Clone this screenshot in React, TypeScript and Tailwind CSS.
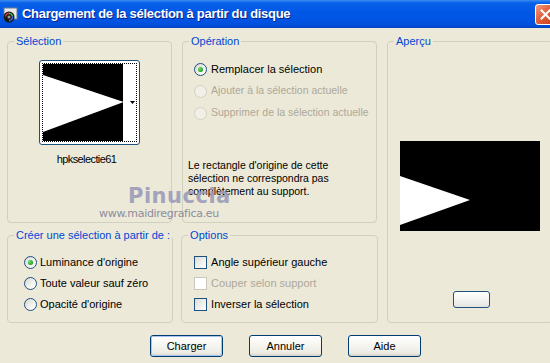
import React from "react";

function Radio({ checked, disabled }: { checked?: boolean; disabled?: boolean }) {
  return (
    <span
      className={
        disabled
          ? "flex h-[13px] w-[13px] shrink-0 items-center justify-center rounded-full border border-[#D3D0C2] bg-[#F2F0E6]"
          : "flex h-[13px] w-[13px] shrink-0 items-center justify-center rounded-full border border-[#1C5180] bg-[linear-gradient(135deg,#D8D8D2_0%,#F4F4F0_60%,#FFFFFF_100%)]"
      }
    >
      {checked && (
        <span className="h-[5px] w-[5px] rounded-full bg-[radial-gradient(circle_at_35%_35%,#6FE06F_0%,#21A121_70%,#1A8A1A_100%)]" />
      )}
    </span>
  );
}

function Check({ disabled }: { disabled?: boolean }) {
  return (
    <span
      className={
        disabled
          ? "block h-[13px] w-[13px] shrink-0 border border-[#CAC8BB] bg-[#FFFFFF]"
          : "block h-[13px] w-[13px] shrink-0 border border-[#1C5180] bg-[linear-gradient(135deg,#DCDCD7_0%,#F2F2EE_60%,#FFFFFF_100%)]"
      }
    />
  );
}

function Group({
  label,
  className,
  children,
}: {
  label: string;
  className: string;
  children?: React.ReactNode;
}) {
  return (
    <fieldset className={"rounded-[4px] border border-[#D0D0BF] " + className}>
      <legend className="ml-[6px] whitespace-nowrap px-[2px] text-[11px] leading-[13px] text-[#0046D5]">{label}</legend>
      {children}
    </fieldset>
  );
}

function XPButton({ label, def }: { label: string; def?: boolean }) {
  return (
    <div className="flex h-[22px] w-[73px] items-center justify-center rounded-[3px] border border-[#003C74] bg-[linear-gradient(to_bottom,#FFFFFF_0%,#F6F5F0_45%,#ECEBE4_85%,#D6D0C5_100%)]">
      <div
        className={
          def
            ? "flex h-full w-full items-center justify-center rounded-[2px] border border-[#A9C4F0] text-[11px] text-black"
            : "flex h-full w-full items-center justify-center text-[11px] text-black"
        }
      >
        {label}
      </div>
    </div>
  );
}

export default function App() {
  return (
    <div className="relative h-[363px] w-[550px] overflow-hidden bg-[#ECE9D8] font-['Liberation_Sans',Arial,sans-serif] text-[10.5px] text-black">
      <div className="flex w-[562px] flex-col">
        {/* Title bar */}
        <div className="flex h-[28px] items-center bg-[linear-gradient(to_bottom,#3D8DF5_0%,#0A62E8_10%,#0058E6_40%,#0054E3_70%,#004FDB_90%,#0041BE_100%)]">
          <svg width="16" height="16" viewBox="0 0 16 16" className="ml-[2px] mt-[2px] shrink-0">
            <rect x="2" y="1" width="13" height="11" fill="#E8E8E8" stroke="#6F7C90" strokeWidth="1" />
            <circle cx="7" cy="10" r="5.5" fill="#1A1A1A" />
            <path d="M3.5 9.5 A3.6 3.6 0 0 1 7 6.3" stroke="#E23C3C" strokeWidth="1.3" fill="none" />
            <path d="M7 6.3 A3.6 3.6 0 0 1 10.5 9.5" stroke="#3CC24A" strokeWidth="1.3" fill="none" />
            <path d="M10.5 9.5 A3.6 3.6 0 0 1 7 13.6" stroke="#3A7BF0" strokeWidth="1.3" fill="none" />
            <circle cx="7" cy="10" r="1.5" fill="#9A9A9A" />
          </svg>
          <span className="ml-[4px] text-[13px] font-bold tracking-[-0.3px] text-white [text-shadow:1px_1px_0_#0A1E8A]">
            Chargement de la sélection à partir du disque
          </span>
          <div className="ml-auto mr-[6px] flex h-[21px] w-[21px] items-center justify-center rounded-[3px] border border-white bg-[linear-gradient(135deg,#F29A7E_0%,#E2603C_45%,#C8401A_100%)]">
            <svg width="11" height="11" viewBox="0 0 11 11">
              <path d="M1.5 1.5 L9.5 9.5 M9.5 1.5 L1.5 9.5" stroke="white" strokeWidth="2" strokeLinecap="square" />
            </svg>
          </div>
        </div>

        {/* Body */}
        <div className="flex flex-col px-[7px] pt-[7px]">
          <div className="flex gap-[10px]">
            {/* Left column */}
            <div className="flex w-[370px] shrink-0 flex-col">
              <div className="flex gap-[10px]">
                <Group label="Sélection" className="h-[188px] w-[165px] shrink-0">
                  <div className="flex flex-col items-center">
                    <div className="mt-[12px] h-[85px] w-[101px] rounded-[3px] border border-[#1C5180] bg-white p-[2px]">
                      <div className="flex h-full w-full border border-dotted border-black">
                        <div className="h-full w-[80px] bg-black">
                          <svg width="80" height="79" viewBox="0 0 80 79" className="block">
                            <polygon points="0,11 81,38 0,68" fill="white" />
                          </svg>
                        </div>
                        <div className="relative flex flex-1 items-center justify-end bg-white pr-[1px]">
                          <svg width="5" height="3" viewBox="0 0 5 3">
                            <polygon points="0,0 5,0 2.5,3" fill="black" />
                          </svg>
                        </div>
                      </div>
                    </div>
                    <div className="mt-[8px] whitespace-nowrap pr-[6px] text-[11px] leading-[13px] tracking-[-0.6px]">hpkselectie61</div>
                  </div>
                </Group>
                <Group label="Opération" className="h-[188px] w-[195px] shrink-0">
                  <div className="mt-[10px] flex flex-col whitespace-nowrap pl-[11px]">
                    <div className="flex h-[22px] items-center gap-[4px]">
                      <Radio checked />
                      <span className="text-[11px]">Remplacer la sélection</span>
                    </div>
                    <div className="flex h-[22px] items-center gap-[4px] text-[#ACA899]">
                      <Radio disabled />
                      <span>Ajouter à la sélection actuelle</span>
                    </div>
                    <div className="flex h-[22px] items-center gap-[4px] text-[#ACA899]">
                      <Radio disabled />
                      <span>Supprimer de la sélection actuelle</span>
                    </div>
                  </div>
                  <p className="mt-[35px] whitespace-nowrap pl-[5px] leading-[13px]">
                    Le rectangle d'origine de cette
                    <br />
                    sélection ne correspondra pas
                    <br />
                    complètement au support.
                  </p>
                </Group>
              </div>
              <div className="mt-[6px] flex gap-[8px]">
                <Group label="Créer une sélection à partir de :" className="h-[94px] w-[165px] shrink-0">
                  <div className="mt-[10px] flex flex-col whitespace-nowrap pl-[16px] text-[11px]">
                    <div className="flex h-[21px] items-center gap-[3px]">
                      <Radio checked />
                      <span>Luminance d'origine</span>
                    </div>
                    <div className="flex h-[21px] items-center gap-[3px]">
                      <Radio />
                      <span>Toute valeur sauf zéro</span>
                    </div>
                    <div className="flex h-[21px] items-center gap-[3px]">
                      <Radio />
                      <span>Opacité d'origine</span>
                    </div>
                  </div>
                </Group>
                <Group label="Options" className="h-[94px] w-[197px] shrink-0">
                  <div className="mt-[10px] flex flex-col whitespace-nowrap pl-[12px] text-[11px]">
                    <div className="flex h-[21px] items-center gap-[4px]">
                      <Check />
                      <span>Angle supérieur gauche</span>
                    </div>
                    <div className="flex h-[21px] items-center gap-[4px] text-[#ACA899]">
                      <Check disabled />
                      <span>Couper selon support</span>
                    </div>
                    <div className="flex h-[21px] items-center gap-[4px]">
                      <Check />
                      <span>Inverser la sélection</span>
                    </div>
                  </div>
                </Group>
              </div>
            </div>

            {/* Aperçu */}
            <Group label="Aperçu" className="h-[288px] w-[166px] shrink-0">
              <div className="flex flex-col">
                <div className="ml-[12px] mt-[93px] h-[90px] w-[140px] bg-black">
                  <svg width="140" height="90" viewBox="0 0 140 90" className="block">
                    <polygon points="0,35 70,59 0,84" fill="white" />
                  </svg>
                </div>
                <div className="ml-[65px] mt-[60px] h-[17px] w-[37px] rounded-[3px] border border-[#1C5180] bg-[linear-gradient(to_bottom,#FFFFFF_0%,#F4F4F2_50%,#E4E3DE_100%)]" />
              </div>
            </Group>
          </div>

          {/* Buttons */}
          <div className="mt-[12px] flex gap-[26px] pl-[143px]">
            <XPButton label="Charger" def />
            <XPButton label="Annuler" />
            <XPButton label="Aide" />
          </div>
        </div>
      </div>

      {/* Watermark overlay */}
      <div className="pointer-events-none absolute left-[128px] top-[181px] font-['DejaVu_Sans',sans-serif] text-[21px] font-semibold tracking-[0.5px] text-[#9C9CBA] opacity-90">
        Pinuccia
      </div>
      <div className="pointer-events-none absolute left-[99px] top-[206px] font-['DejaVu_Sans',sans-serif] text-[11px] tracking-[-0.3px] text-[#8C8C9E]">
        www.maidiregrafica.eu
      </div>
    </div>
  );
}
